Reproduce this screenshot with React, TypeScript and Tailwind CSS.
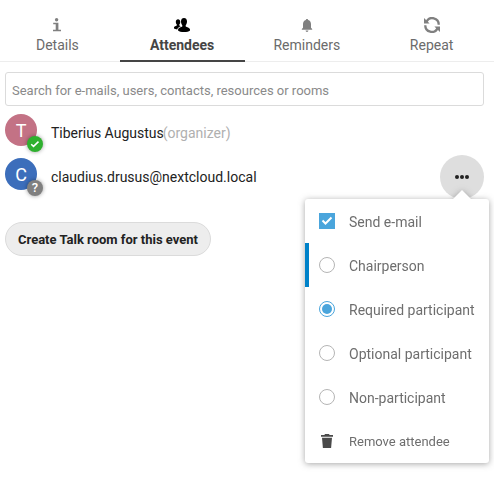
import React from 'react';

function InfoIcon() {
  return (
    <svg width="16" height="16" viewBox="0 0 16 16" fill="#808080">
      <circle cx="7.6" cy="2.700" r="1.700" />
      <path d="M4.200 5.800h5.200v6.900h2.600v1.500H4v-1.500h2.700V7.300H4.200z" />
    </svg>
  );
}

function GroupIcon() {
  return (
    <svg width="16" height="16" viewBox="0 0 16 16" fill="#000">
      <path d="M10 1C8.300 1 7 2.200 7 4.300c0 1.600.5 3.200 1.300 4v1.300C7 10.200 4.500 11 4.200 12c-.2.800-.2 1.400.1 1.700.8.800 3 1.300 5.700 1.300s5-.5 5.800-1.300c.3-.3.300-1 .1-1.700-.4-1-3-1.800-4.200-2.400V8.300c.8-.8 1.300-2.400 1.300-4C13 2.200 11.700 1 10 1z" />
      <path d="M4 2.300c-1.200 0-2.200 1-2.200 2.600 0 1.100.4 2 1 2.600v.9C1.600 8.900.2 9.500 0 10.300v1.200c.7.500 1.700.8 3.200.9.500-1.700 2-2.600 3.600-3.200L5.300 8.400v-.9c.6-.6 1-1.500 1-2.600C6.300 3.300 5.300 2.300 4 2.300z" />
    </svg>
  );
}

function BellIcon() {
  return (
    <svg width="16" height="16" viewBox="0 0 16 16" fill="#808080">
      <path d="M8 2c-.7 0-1.100.4-1.100 1C4.900 3.500 4 5.200 4 7v3.800l-1.200 1.300v.7h10.400v-.7L12 10.800V7c0-1.800-.9-3.500-2.900-4 0-.6-.4-1-1.100-1zM6.600 13.500c0 .8.600 1.400 1.400 1.400s1.400-.6 1.400-1.400z" />
    </svg>
  );
}

function RepeatIcon() {
  return (
    <svg width="16" height="16" viewBox="0 0 16 16" fill="none" stroke="#808080" strokeWidth="2.300">
      <path d="M2.500 4.800A6.400 6.400 0 0 1 14.700 7.700M13.500 11.200A6.400 6.400 0 0 1 1.300 8.300" />
      <path d="M0 1v5.600h5.600zM16 15V9.400h-5.600z" fill="#808080" stroke="none" />
    </svg>
  );
}

const tabs = [
  { label: 'Details', icon: <InfoIcon /> },
  { label: 'Attendees', icon: <GroupIcon />, active: true },
  { label: 'Reminders', icon: <BellIcon /> },
  { label: 'Repeat', icon: <RepeatIcon /> },
];

function Tabs() {
  return (
    <nav className="-ml-[5px] flex h-[62px] w-[499px] pt-[17px]">
      {tabs.map((t) => (
        <div
          key={t.label}
          className={
            t.active
              ? 'flex flex-1 flex-col items-center border-b-2 border-[#454545] font-bold text-[#454545]'
              : 'flex flex-1 flex-col items-center border-b border-[#ededed] text-[#6b6b6b]'
          }
        >
          {t.icon}
          <span className="mt-[1px] text-[14px] leading-[22px]">{t.label}</span>
        </div>
      ))}
    </nav>
  );
}

function Avatar({ letter, color, badge, children }: { letter: string; color: string; badge: string; children: React.ReactNode }) {
  return (
    <div className={`relative flex size-8 shrink-0 items-center justify-center rounded-full text-[18px] text-white ${color}`}>
      {letter}
      <div className={`absolute -right-[6px] -bottom-[6px] flex size-4 items-center justify-center rounded-full shadow-[0_0_4px_rgba(0,0,0,0.4)] ${badge}`}>
        {children}
      </div>
    </div>
  );
}

const roles = [
  { label: 'Chairperson', bar: true },
  { label: 'Required participant', checked: true },
  { label: 'Optional participant' },
  { label: 'Non-participant' },
];

function Menu() {
  return (
    <div className="absolute top-[199px] left-[305px] h-[264px] w-[184px] rounded-[3px] bg-white text-[14px] text-[#6e6e6e] [filter:drop-shadow(0_1px_3px_rgba(77,77,77,0.5))]">
      <div className="absolute -top-[9px] right-[18px] h-[9px] w-[18px] bg-white [clip-path:polygon(50%_0,100%_100%,0_100%)]" />
      <div className="flex h-11 items-center pl-[14px]">
        <span className="flex size-4 items-center justify-center bg-[#4aa5dc]">
          <svg width="12" height="12" viewBox="0 0 12 12" fill="none" stroke="#fff" strokeWidth="2">
            <path d="M1.500 5.500l3 3 6-6" />
          </svg>
        </span>
        <span className="ml-[14px] pt-0.5">Send e-mail</span>
      </div>
      {roles.map((r) => (
        <div key={r.label} className={r.bar ? 'flex h-11 items-center border-l-4 border-[#0082c9] pl-[10px]' : 'flex h-11 items-center pl-[14px]'}>
          <span className={r.checked ? 'flex size-4 items-center justify-center rounded-full border border-[#4aa5dc]' : 'size-4 rounded-full border border-[#b5b5b5]'}>
            {r.checked && <span className="size-[10px] rounded-full bg-[#4aa5dc]" />}
          </span>
          <span className="ml-[14px] pt-0.5 whitespace-nowrap">{r.label}</span>
        </div>
      ))}
      <div className="flex h-11 items-center pl-[14px] text-[13px]">
        <svg width="16" height="16" viewBox="0 0 16 16" fill="#4a4a4a">
          <path d="M6 1h4l.6 1H14v1.800H2V2h3.400zM3 4.800h10l-.9 10.200H3.900z" />
        </svg>
        <span className="ml-[14px] pt-0.5">Remove attendee</span>
      </div>
    </div>
  );
}

export default function App() {
  return (
    <div className="relative h-[480px] w-[494px] overflow-hidden bg-white font-[Roboto,sans-serif] text-[14px] text-[#222]">
      <Tabs />
      <div className="px-[5px] pt-[10px]">
        <input
          className="block h-[34px] w-[479px] rounded-[3px] border border-[#dbdbdb] bg-white px-[6px] pt-[3px] text-[13px] placeholder:text-[#8a8a8a]"
          placeholder="Search for e-mails, users, contacts, resources or rooms"
        />
        <div className="mt-[5px] flex h-11 items-center">
          <div className="-mt-[6px]">
            <Avatar letter="T" color="bg-[#c37285]" badge="bg-[#2eb02e]">
              <svg width="10" height="10" viewBox="0 0 10 10" fill="none" stroke="#fff" strokeWidth="1.500">
                <path d="M1.200 5.200l2.300 2.200 5-4.800" />
              </svg>
            </Avatar>
          </div>
          <span className="ml-[14px]">Tiberius Augustus</span>
          <span className="-ml-px text-[#b0b0b0]">(organizer)</span>
        </div>
        <div className="flex h-11 items-center">
          <div className="-mt-[6px]">
            <Avatar letter="C" color="bg-[#3c6ebb]" badge="bg-[#808080]">
              <span className="text-[13px] leading-4 font-medium">?</span>
            </Avatar>
          </div>
          <span className="ml-[14px]">claudius.drusus@nextcloud.local</span>
          <div className="mr-[5px] ml-auto flex size-11 items-center justify-center gap-[1px] rounded-full bg-[#dedede]">
            <span className="size-1 rounded-full bg-[#222]" />
            <span className="size-1 rounded-full bg-[#222]" />
            <span className="size-1 rounded-full bg-[#222]" />
          </div>
        </div>
        <button className="mt-[23px] h-[34px] w-[206px] rounded-full border border-[#dbdbdb] bg-[#ededed] pt-[2px] text-[13px] font-bold text-[#222]">
          Create Talk room for this event
        </button>
      </div>
      <Menu />
    </div>
  );
}
